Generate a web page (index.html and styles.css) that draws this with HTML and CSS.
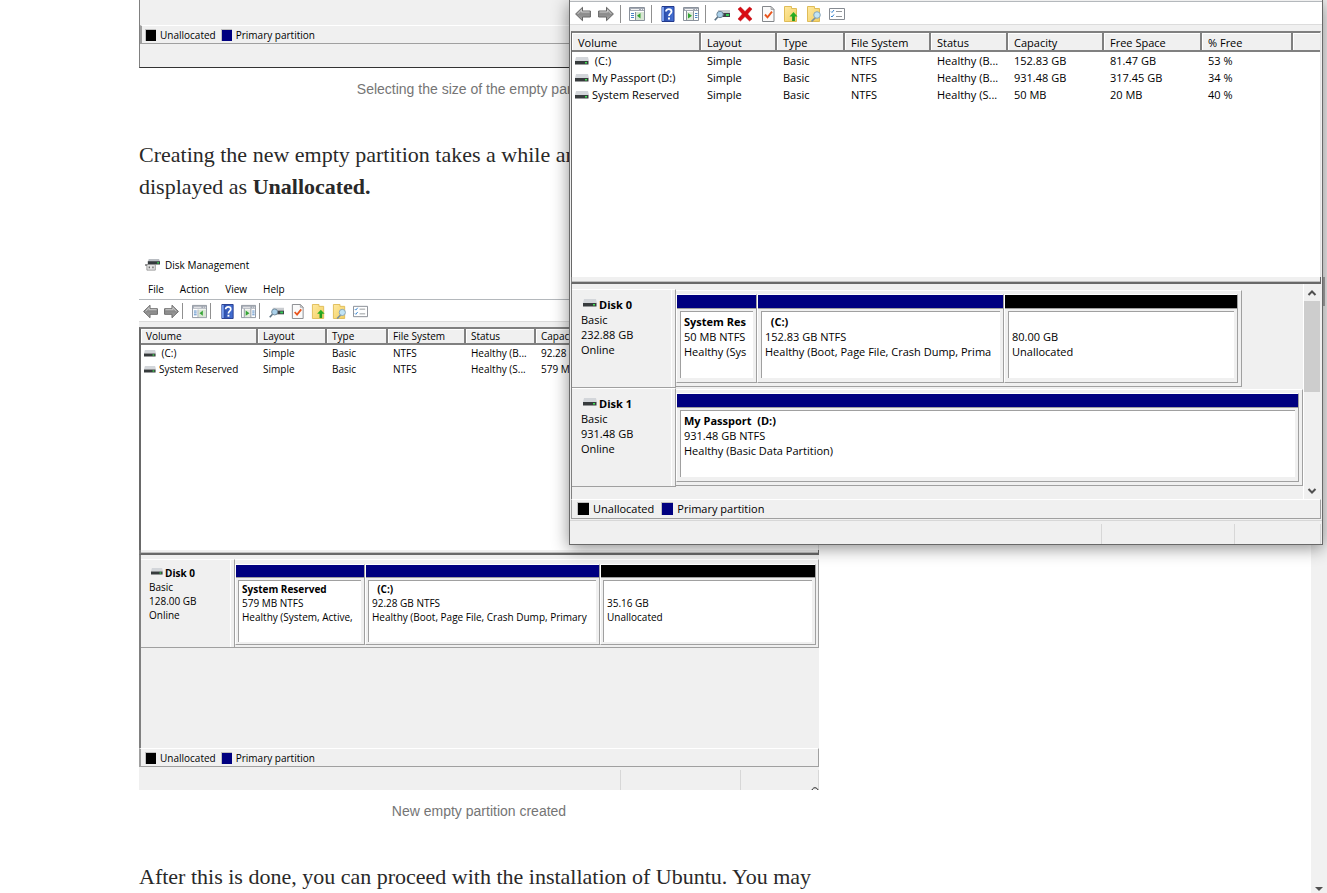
FILE: index.html
```html
<!DOCTYPE html>
<html lang="en">
<head>
<meta charset="utf-8">
<title>Creating an empty partition</title>
<link rel="stylesheet" href="styles.css">
</head>
<body>
<svg class="sprite" aria-hidden="true">
  <defs>
    <linearGradient id="g-arrow" x1="0" y1="0" x2="0" y2="1"><stop offset="0" stop-color="#c4c4c4"/><stop offset=".5" stop-color="#8a8a8a"/><stop offset="1" stop-color="#a8a8a8"/></linearGradient>
    <linearGradient id="g-help" x1="0" y1="0" x2="1" y2="0"><stop offset="0" stop-color="#24439f"/><stop offset="1" stop-color="#4673d8"/></linearGradient>
    <linearGradient id="g-folder" x1="0" y1="0" x2="1" y2="1"><stop offset="0" stop-color="#ffe9a0"/><stop offset="1" stop-color="#f2cf62"/></linearGradient>
  </defs>
  <symbol id="i-back" viewBox="0 0 16 16"><path d="M.6 8 7.500 1.300V5h7.900v6H7.500v3.700z" fill="url(#g-arrow)" stroke="#666"/><path d="M2.600 8 6.500 4V6h8" fill="none" stroke="#d2d2d2" stroke-width=".8"/></symbol>
  <symbol id="i-forward" viewBox="0 0 16 16"><path d="M15.400 8 8.500 1.300V5H.6v6h7.900v3.700z" fill="url(#g-arrow)" stroke="#666"/><path d="M1.600 6h7.900V4l3.900 4" fill="none" stroke="#d2d2d2" stroke-width=".8"/></symbol>
  <symbol id="i-tree" viewBox="0 0 16 16"><path fill="#fff" stroke="#8b929c" d="M.5 1.500h15v13H.5z"/><path fill="#a4aab4" d="M1 2h14v3H1z"/><path fill="#f4f4f4" d="M2 3h8v1H2zM12 3h1v1h-1zM14 3h1v1h-1z"/><path stroke="#8b929c" d="M6.500 6v8"/><path stroke="#4a84c4" d="M2 7.500h3M2 9.500h3M2 11.500h3"/><path fill="#d8e6d4" d="M7 6h8v8H7z"/><path fill="#35a535" d="M11.500 7v5.500L8 9.800z"/></symbol>
  <symbol id="i-pane" viewBox="0 0 16 16"><path fill="#fff" stroke="#8b929c" d="M.5 1.500h15v13H.5z"/><path fill="#a4aab4" d="M1 2h14v3H1z"/><path fill="#f4f4f4" d="M2 3h8v1H2zM12 3h1v1h-1zM14 3h1v1h-1z"/><path fill="#e1eadd" d="M4 6h6v8H4z"/><path stroke="#8b929c" d="M3.500 5v9M10.500 5v9"/><path stroke="#4a84c4" d="M12 7.500h2.500M12 9.500h2.500M12 11.500h2.500"/><path fill="#35a535" d="M5 7v5.500L9 9.800z"/></symbol>
  <symbol id="i-help" viewBox="0 0 16 16"><path fill="url(#g-help)" stroke="#22398c" d="M2 .5h12v15H2z"/><path fill="#7ba0ee" d="M2 1h2v14H2z"/><path d="M6 5.500c0-3.300 5.500-3 5.500 0C11.500 7.700 9 7.500 9 10" fill="none" stroke="#fff" stroke-width="1.800"/><path fill="#fff" d="M8 11.500h2v2H8z"/></symbol>
  <symbol id="i-rescan" viewBox="0 0 16 16"><path fill="#c9ccd0" d="M4 4h12v3H4z"/><path fill="#3f4448" d="M5 7h11v4H5z"/><path fill="#32cf54" d="M12 8h3v2h-3z"/><circle cx="6" cy="8.500" r="3.200" fill="#a9cfe9" stroke="#70899b"/><path d="M3.700 11 .8 14.200" stroke="#5b7284" stroke-width="1.700"/></symbol>
  <symbol id="i-delete" viewBox="0 0 16 16"><path fill="#d90b12" stroke="#b5070e" stroke-width=".5" d="M1 3 3.500 1 8 5.500 12.500 1 15 3 10.700 8 15 13l-2.500 2L8 10.600 3.500 15 1 13 5.300 8z"/></symbol>
  <symbol id="i-check" viewBox="0 0 16 16"><path fill="#fafafa" stroke="#85888c" d="M2.500.5h8.500l3 3v12H2.500z"/><path fill="#d4d4d4" stroke="#85888c" stroke-width=".6" d="M11 .5v3h3z"/><path d="m5 8.500 2.500 2.800L12 5.700" fill="none" stroke="#e9551d" stroke-width="1.900"/></symbol>
  <symbol id="i-up" viewBox="0 0 16 16"><path fill="url(#g-folder)" stroke="#dfbc58" d="M1.500.5h7v2h5v13h-12z"/><path d="M10.500 15V9.500" stroke="#239b20" stroke-width="2.800"/><path fill="#28ae23" d="m10.500 6 4 4.500h-8z"/></symbol>
  <symbol id="i-find" viewBox="0 0 16 16"><path fill="url(#g-folder)" stroke="#dfbc58" d="M1.500.5h7v2h5v13h-12z"/><path d="m9.500 11.500-4 4" stroke="#7b909e" stroke-width="1.700"/><circle cx="11" cy="9" r="3.300" fill="#c1e4f5" stroke="#88a4b6"/></symbol>
  <symbol id="i-list" viewBox="0 0 16 16"><path fill="#fff" stroke="#868b92" d="M.5 2.500h15v11H.5z"/><path fill="none" stroke="#3381cd" d="m2 5.500 1 1 2-2.500m-3 6 1 1 2-2.500"/><path stroke="#92969a" d="M7 5.500h6M7 10.500h6"/></symbol>
  <symbol id="i-drive" viewBox="0 0 14 8"><path fill="#d3d6da" d="M1 0h12l1 4H0z"/><path fill="#373b3d" d="M0 4h13.500v3.500H0z"/><path fill="#3fe252" d="M10 5h2v1.500h-2z"/></symbol>
  <symbol id="i-app" viewBox="0 0 16 16"><path fill="#b9bdc2" d="M4 2h11l1 3H3z"/><path fill="#34393d" d="M3 4.500h13V8H3z"/><path fill="#38cf50" d="M13 5.500h2V7h-2z"/><path fill="#e4e4e4" stroke="#777" stroke-width=".7" d="M2 8h9v6H2z"/><path fill="#333" d="M4 10h1v2H4zM8 10h1v2H8zM0 8h2v1H0z"/></symbol>
</svg>

<div class="page">
  <main class="column">
    <article class="story">
      <figure>
        <div class="shot shot-end">
          <div class="legend"><span class="key black"></span>Unallocated<span class="key navy"></span>Primary partition</div>
          <div class="status"></div>
        </div>
        <figcaption>Selecting the size of the empty partition</figcaption>
      </figure>
      <p>Creating the new empty partition takes a while and when finished, it is displayed as <strong>Unallocated.</strong></p>
      <figure class="second">
        <div class="shot">
          <div class="titlebar"><svg class="app"><use href="#i-app"/></svg>Disk Management</div>
          <nav class="menu"><button>File</button><button>Action</button><button>View</button><button>Help</button></nav>
          <div class="toolbar">
            <button aria-label="Back"><svg><use href="#i-back"/></svg></button><button aria-label="Forward"><svg><use href="#i-forward"/></svg></button><i></i>
            <button aria-label="Console tree"><svg><use href="#i-tree"/></svg></button><i></i>
            <button aria-label="Help"><svg><use href="#i-help"/></svg></button><button aria-label="Action pane"><svg><use href="#i-pane"/></svg></button><i></i>
            <button aria-label="Rescan"><svg><use href="#i-rescan"/></svg></button><button aria-label="Properties"><svg><use href="#i-check"/></svg></button><button aria-label="Up"><svg><use href="#i-up"/></svg></button><button aria-label="Find"><svg><use href="#i-find"/></svg></button><button aria-label="Settings"><svg><use href="#i-list"/></svg></button>
          </div>
          <div class="volumes">
            <table>
              <colgroup><col class="s1"><col class="s2"><col class="s3"><col class="s4"><col class="s5"><col></colgroup>
              <thead><tr><th>Volume</th><th>Layout</th><th>Type</th><th>File System</th><th>Status</th><th>Capacity</th></tr></thead>
              <tbody>
                <tr><td><svg class="drive"><use href="#i-drive"/></svg>&nbsp;(C:)</td><td>Simple</td><td>Basic</td><td>NTFS</td><td>Healthy (B...</td><td>92.28 GB</td></tr>
                <tr><td><svg class="drive"><use href="#i-drive"/></svg>System Reserved</td><td>Simple</td><td>Basic</td><td>NTFS</td><td>Healthy (S...</td><td>579 MB</td></tr>
              </tbody>
            </table>
          </div>
          <div class="splitter"></div>
          <div class="disks">
            <section class="disk">
              <div class="label"><b><svg class="drive"><use href="#i-drive"/></svg>Disk 0</b><span>Basic</span><span>128.00 GB</span><span>Online</span></div>
              <div class="graph shot-parts">
                <div class="part"><div class="bar navy"></div><div class="box"><b>System Reserved</b><span>579 MB NTFS</span><span>Healthy (System, Active,</span></div></div>
                <div class="part"><div class="bar navy"></div><div class="box"><b>&nbsp; (C:)</b><span>92.28 GB NTFS</span><span>Healthy (Boot, Page File, Crash Dump, Primary</span></div></div>
                <div class="part"><div class="bar black"></div><div class="box"><b>&nbsp;</b><span>35.16 GB</span><span>Unallocated</span></div></div>
              </div>
            </section>
          </div>
          <div class="legend"><span class="key black"></span>Unallocated<span class="key navy"></span>Primary partition</div>
          <div class="status"><span></span><span></span><svg class="curl" viewBox="0 0 8 3"><path d="M1 3c1-3 5-3 6 0" fill="none" stroke="#222"/></svg></div>
        </div>
        <figcaption>New empty partition created</figcaption>
      </figure>
      <p>After this is done, you can proceed with the installation of Ubuntu. You may</p>
    </article>
  </main>
  <aside class="side"></aside>
  <div class="page-scroll"><div class="page-thumb"></div><svg viewBox="0 0 16 9"><path d="M4 3h8L8 7z" fill="#505050"/></svg></div>
</div>

<div class="window">
  <div class="toolbar">
    <button aria-label="Back"><svg><use href="#i-back"/></svg></button><button aria-label="Forward"><svg><use href="#i-forward"/></svg></button><i></i>
    <button aria-label="Console tree"><svg><use href="#i-tree"/></svg></button><i></i>
    <button aria-label="Help"><svg><use href="#i-help"/></svg></button><button aria-label="Action pane"><svg><use href="#i-pane"/></svg></button><i></i>
    <button aria-label="Rescan"><svg><use href="#i-rescan"/></svg></button><button aria-label="Delete"><svg><use href="#i-delete"/></svg></button><button aria-label="Properties"><svg><use href="#i-check"/></svg></button><button aria-label="Up"><svg><use href="#i-up"/></svg></button><button aria-label="Find"><svg><use href="#i-find"/></svg></button><button aria-label="Settings"><svg><use href="#i-list"/></svg></button>
  </div>
  <div class="volumes">
    <table>
      <colgroup><col class="w1"><col class="w2"><col class="w3"><col class="w4"><col class="w5"><col class="w6"><col class="w7"><col class="w8"><col></colgroup>
      <thead><tr><th>Volume</th><th>Layout</th><th>Type</th><th>File System</th><th>Status</th><th>Capacity</th><th>Free Space</th><th>% Free</th><th></th></tr></thead>
      <tbody>
        <tr><td><svg class="drive"><use href="#i-drive"/></svg>&nbsp;(C:)</td><td>Simple</td><td>Basic</td><td>NTFS</td><td>Healthy (B...</td><td>152.83 GB</td><td>81.47 GB</td><td>53 %</td><td></td></tr>
        <tr><td><svg class="drive"><use href="#i-drive"/></svg>My Passport (D:)</td><td>Simple</td><td>Basic</td><td>NTFS</td><td>Healthy (B...</td><td>931.48 GB</td><td>317.45 GB</td><td>34 %</td><td></td></tr>
        <tr><td><svg class="drive"><use href="#i-drive"/></svg>System Reserved</td><td>Simple</td><td>Basic</td><td>NTFS</td><td>Healthy (S...</td><td>50 MB</td><td>20 MB</td><td>40 %</td><td></td></tr>
      </tbody>
    </table>
  </div>
  <div class="splitter"></div>
  <div class="lower">
    <div class="disks">
      <section class="disk">
        <div class="label"><b><svg class="drive"><use href="#i-drive"/></svg>Disk 0</b><span>Basic</span><span>232.88 GB</span><span>Online</span></div>
        <div class="graph disk0-parts">
          <div class="part"><div class="bar navy"></div><div class="box"><b>System Res</b><span>50 MB NTFS</span><span>Healthy (Sys</span></div></div>
          <div class="part"><div class="bar navy"></div><div class="box"><b>&nbsp; (C:)</b><span>152.83 GB NTFS</span><span>Healthy (Boot, Page File, Crash Dump, Prima</span></div></div>
          <div class="part"><div class="bar black"></div><div class="box"><b>&nbsp;</b><span>80.00 GB</span><span>Unallocated</span></div></div>
        </div>
      </section>
      <section class="disk">
        <div class="label"><b><svg class="drive"><use href="#i-drive"/></svg>Disk 1</b><span>Basic</span><span>931.48 GB</span><span>Online</span></div>
        <div class="graph">
          <div class="part"><div class="bar navy"></div><div class="box"><b>My Passport &nbsp;(D:)</b><span>931.48 GB NTFS</span><span>Healthy (Basic Data Partition)</span></div></div>
        </div>
      </section>
    </div>
    <div class="scroll">
      <svg viewBox="0 0 16 17"><path d="M4.500 11 8 7.500l3.500 3.500" fill="none" stroke="#505050" stroke-width="2"/></svg>
      <div class="thumb"></div>
      <svg viewBox="0 0 16 17"><path d="M4.500 7 8 10.500 11.500 7" fill="none" stroke="#505050" stroke-width="2"/></svg>
    </div>
  </div>
  <div class="legend"><span class="key black"></span>Unallocated<span class="key navy"></span>Primary partition</div>
  <div class="status"><span></span><span></span></div>
</div>
</body>
</html>
```

FILE: styles.css
```css
* { box-sizing: border-box; }
body { margin: 0; background: #fff; overflow: hidden; }
button { border: 0; padding: 0; margin: 0; background: none; font: inherit; color: inherit; }
.sprite { position: absolute; width: 0; height: 0; }

/* Article */
.page { display: grid; grid-template-columns: minmax(0, 1fr) 353px 16px; height: 100vh; overflow: hidden; }
.column { min-width: 0; overflow: hidden; }
.story { max-width: 680px; margin: 0 auto; color: #292929; font: 22px/32px "Liberation Serif", serif; }
.story p { margin: 40px 0 0; }
figure { margin: 0; }
.second { margin-top: 52px; }
figcaption { margin-top: 11px; text-align: center; color: #757575; font: 14px/20px "Liberation Sans", sans-serif; }
.page-scroll { background: #f1f1f1; display: flex; flex-direction: column; }
.page-thumb { height: 29px; margin: 277px 2px auto; background: #a8a8a8; }
.page-scroll svg { width: 16px; height: 9px; }

/* Shared disk-management parts */
.window, .shot { color: #000; background: #f0f0f0; font-family: "Open Sans", "Noto Sans", sans-serif; }
.navy { background: #000080; }
.black { background: #000; }
.toolbar { display: flex; align-items: center; background: #fff; border: solid #b4b8bc; border-width: 1px 0; border-bottom-color: #dcdcdc; }
.toolbar button { display: flex; justify-content: center; }
.toolbar svg { width: 16px; height: 16px; }
.toolbar i { width: 8px; height: 18px; border-left: 1px solid #909090; }
.volumes { background: #fff; border: 2px solid #696969; border-top-color: #808080; border-right: 1px solid #e3e3e3; border-bottom: 0; }
table { width: 100%; table-layout: fixed; border-collapse: separate; border-spacing: 0; }
th { text-align: left; font-weight: normal; background: #f0f0f0; border-right: 2px solid #808080; border-bottom: 2px solid #808080; box-shadow: inset 1px 1px #fff; }
th:last-child { border-right: 0; }
th, td { white-space: nowrap; overflow: hidden; }
.drive { width: 14px; height: 8px; }
.splitter { border-left: 2px solid #808080; border-right: 1px solid #696969; border-bottom: 2px solid #696969; box-shadow: inset 0 -1px #c0c0c0; }
.disks { border-left: 2px solid #808080; }
.disk { display: flex; }
.label { border-top: 1px solid #fff; border-bottom: 1px solid #a0a0a0; border-right: 1px solid #a0a0a0; box-shadow: inset -3px 0 #f0f0f0, inset -4px 0 #fff; }
.label b, .label span, .box b, .box span { display: block; white-space: nowrap; }
.label b .drive { margin: 0 2px 2px; }
.graph { flex: 1; min-width: 0; display: grid; border: 1px solid #fff; border-left: 0; border-right-color: #a0a0a0; border-bottom-color: #a0a0a0; }
.part { min-width: 0; display: flex; flex-direction: column; border: 1px solid #fff; border-right-color: #a0a0a0; border-bottom-color: #a0a0a0; }
.bar { box-shadow: 0 1px #a0a0a0; }
.box { flex: 1; background: #fff; border: solid #a0a0a0; border-width: 1px 0 0 1px; overflow: hidden; }
.legend { display: flex; align-items: center; border: solid #a0a0a0; border-width: 1px 1px 1px 2px; border-top-color: #fff; }
.key { border: 1px solid #c0c0c0; border-right: 0; border-bottom: 0; }
.status { display: flex; justify-content: flex-end; }
.status span { border-left: 1px solid #d7d7d7; }

/* Screenshot inside the article */
.shot { font-size: 10px; line-height: 14px; }
.shot-end { padding-top: 25px; border-left: 1px solid #808080; border-bottom: 1px solid #333; }
.titlebar { display: flex; align-items: center; gap: 5px; height: 19px; padding-left: 6px; background: #fff; }
.app { width: 15px; height: 15px; }
.menu { display: flex; gap: 16px; height: 25px; padding: 4px 9px 0; align-items: center; background: #fff; }
.shot .toolbar { height: 23px; padding: 1px 0 0 1px; margin-bottom: 5px; }
.shot .toolbar button { width: 21px; }
.shot .toolbar svg { width: 15px; height: 15px; }
.shot .toolbar i { width: 7px; height: 16px; }
.shot .volumes { min-height: 223px; }
.shot th, .shot td { height: 16px; padding: 0 0 0 5px; }
.shot td:first-child { padding-left: 3px; }
.shot td .drive { width: 12px; height: 7px; margin-right: 3px; }
.s1 { width: 117px; } .s2 { width: 69px; } .s3 { width: 61px; } .s4 { width: 78px; } .s5 { width: 70px; }
.shot .splitter { height: 5px; }
.shot .disks { padding-top: 4px; padding-bottom: 100px; }
.shot .disk { min-height: 89px; }
.shot .label { width: 94px; padding: 6px 0 0 8px; }
.shot .label .drive { width: 12px; height: 7px; }
.shot .graph { padding: 4px 2px 2px 0; }
.shot-parts { grid-template-columns: 130fr 235fr 216fr; }
.shot .bar { height: 12px; }
.shot .box { margin: 3px 3px 2px 2px; padding: 1px 0 0 3px; }
.shot .legend { height: 19px; padding-left: 4px; }
.shot-end .legend { padding-left: 3px; }
.shot .key { width: 11px; height: 12px; margin-right: 4px; }
.shot .key.navy { margin-left: 5px; }
.shot .status { height: 23px; padding-top: 3px; position: relative; }
.shot .status span:first-child { width: 120px; }
.shot .status span + span { width: 79px; border-right: 1px solid #d7d7d7; }
.curl { position: absolute; right: 0; bottom: 0; width: 8px; height: 3px; }

/* Foreground window */
.window { position: absolute; top: 0; left: 569px; right: 4px; padding-top: 1px; border: 1px solid #696969; border-top: 0; box-shadow: 0 3px 16px rgba(0, 0, 0, .45); font-size: 11px; line-height: 15px; }
.window .toolbar { height: 24px; padding: 2px 0 0 1px; margin-bottom: 6px; }
.window .toolbar button { width: 23px; }
.window .toolbar i { height: 18px; margin-left: 3px; width: 5px; }
.window .volumes { min-height: 246px; margin: 0 1px; border-width: 2px 1px 0 1px; }
.window th, .window td { height: 17px; padding: 0 0 0 6px; }
.window th { height: 19px; padding-top: 2px; }
.window td:first-child { padding-left: 3px; }
.window td .drive { margin-right: 3px; }
.w1 { width: 129px; } .w2 { width: 76px; } .w3 { width: 68px; } .w4 { width: 86px; } .w5 { width: 77px; } .w6 { width: 96px; } .w7 { width: 98px; } .w8 { width: 91px; }
.window .splitter { height: 7px; margin: 0 1px; border-left-width: 1px; }
.lower { display: flex; margin: 0 1px; }
.window .disks { flex: 1; min-width: 0; padding: 5px 0 12px; border-left-width: 1px; }
.window .disk { min-height: 99px; }
.window .label { width: 104px; padding: 7px 0 0 9px; }
.window .graph { padding: 3px 3px 3px 0; margin: 1px 0; }
.window .disk0-parts { grid-template-columns: 81fr 247fr 234fr; margin-right: 61px; }
.window .bar { height: 13px; }
.window .box { margin: 3px 3px 4px 3px; padding: 2px 0 0 3px; }
.scroll { width: 17px; margin-right: 1px; display: flex; flex-direction: column; border-left: 1px solid #fff; }
.scroll svg { width: 16px; height: 17px; }
.thumb { height: 91px; margin-bottom: auto; background: #cdcdcd; }
.window .legend { height: 20px; margin: 0 1px; padding: 0 0 1px 5px; border-left-width: 1px; }
.window .key { width: 12px; height: 13px; margin-right: 4px; }
.window .key.navy { margin-left: 7px; }
.window .status { height: 24px; padding-top: 3px; margin-top: 1px; border-top: 1px solid #d7d7d7; }
.window .status span:first-child { width: 133px; }
.window .status span + span { width: 87px; margin-right: 1px; border-right: 1px solid #d7d7d7; }
```
